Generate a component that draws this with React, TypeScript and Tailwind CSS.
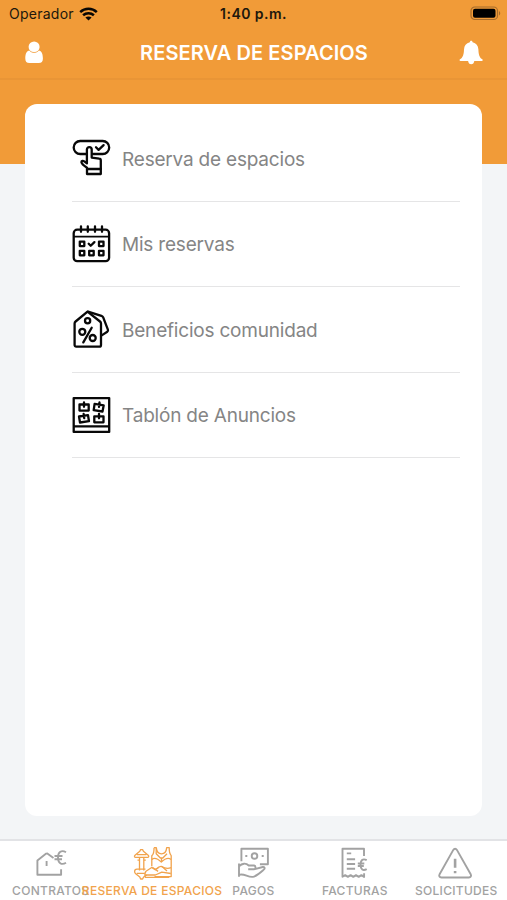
import { ReactNode } from "react"

type IconProps = { children: ReactNode }

const RowIcon = ({ children }: IconProps) => (
  <svg className="w-10 h-10 shrink-0" viewBox="0 0 40 40" fill="none" stroke="#080808" strokeWidth="2.3" strokeLinecap="round" strokeLinejoin="round">{children}</svg>
)

const TabIcon = ({ children }: IconProps) => (
  <svg className="w-10 h-9 shrink-0" viewBox="0 0 40 36" fill="none" stroke="currentColor" strokeWidth="1.9" strokeLinejoin="round">{children}</svg>
)

const menu = [
  {
    label: "Reserva de espacios",
    icon: (
      <RowIcon>
        <path d="M14 16H8.2A6.5 6.5 0 0 1 8.2 3H30.7A6.5 6.5 0 0 1 30.7 16H21" />
        <path d="M24 9.3l2.6 2.6 5-4.8" />
        <path d="M15 31v-1.2c-3-2-5.4-3.8-5.6-5.6 0-1.4 1.7-1.6 2.9-.8l2.6 2V11.5a2.4 2.4 0 0 1 4.8 0V19.6l7.5 1.1c1 .1 1.600.8 1.600 1.800v8.500" />
        <path d="M15 31h13.8v5H15z" />
      </RowIcon>
    ),
  },
  {
    label: "Mis reservas",
    icon: (
      <RowIcon>
        <rect x="1.7" y="5.7" width="35.4" height="31.5" rx="3.5" />
        <path d="M2 12.7h35" strokeWidth="1.8" />
        <path d="M9 2.5v5.300M15.800 2.500v5.300M23 2.500v5.300M30 2.500v5.300" />
        <path d="M7.8 17.6h4.5v4.5H7.8zM27 17.6h4.5v4.5H27zM7.8 26.8h4.5v4.5H7.8zM17.2 26.8h4.5v4.5h-4.5zM27 26.8h4.5v4.5H27z" />
        <path d="M16.7 19.7l2 2 3.7-3.6" />
      </RowIcon>
    ),
  },
  {
    label: "Beneficios comunidad",
    icon: (
      <RowIcon>
        <path d="M15.5 2.7L28 12.5c.6.5 1 1.2 1 2V36c0 1-.7 1.7-1.7 1.7H4.3c-1 0-1.7-.7-1.7-1.7V14.5c0-.8.4-1.5 1-2z" />
        <path d="M16 2.7l13.4 4.1c.9.3 1.5.8 1.8 1.6l4.7 12.3c.3.8 0 1.5-.6 2L29.3 26.6" />
        <circle cx="15.6" cy="11.7" r="2.6" />
        <circle cx="10.3" cy="22.8" r="3" />
        <circle cx="20.7" cy="29" r="3" />
        <path d="M19.7 18.8l-8.4 14.6" />
      </RowIcon>
    ),
  },
  {
    label: "Tablón de Anuncios",
    icon: (
      <RowIcon>
        <path d="M1.7 3.1h35.5v33.8H1.7zM2 31.4h35" />
        <path d="M7.5 9.5h9.2v6.1H7.5zM12 7.5v4.3" />
        <path d="M22.6 8.9l9.1 1.4-1.2 6.2-8.800-1.400zM27.5 7.5l-.5 4.3" />
        <path d="M7 21.5l9-1.3 1 6-9 1.3zM11.6 18.8l.6 4.3" />
        <path d="M22.3 21.3h9.2v6h-9.2zM27 19v4.3" />
      </RowIcon>
    ),
  },
]

const tabs = [
  {
    label: "CONTRATOS",
    icon: (
      <TabIcon>
        <path d="M22.5 12l-6.2-4.5-1.1.1-8.8 6.8V28.8h23.7v-5.6" />
        <path d="M15.6 15v5" />
        <path d="M35 6.2c-4.5-2.6-8-.2-8 5.3s3.5 8 8 5.2M23.5 10h8M23.5 13.3h7.5" />
      </TabIcon>
    ),
  },
  {
    label: "RESERVA DE ESPACIOS",
    active: true,
    icon: (
      <TabIcon>
        <g strokeWidth="1.3">
          <path d="M8.6 3.6h2l.8 1.6 4.8 4c.9.8.7 2.2-.7 2.2H3.7c-1.4 0-1.6-1.4-.7-2.2l4.8-4zM5 8.6h9.3" />
          <path d="M7.5 11.4v13.2M11.8 11.4v13.2M5.500 14.200h2M11.800 14.200h2" />
          <path d="M2.600 25.800c0-1.700.8-2.600 2.300-2.600h8.600M2.600 25.800c0 1 .5 1.500 1.100 2l4.100 3.200.8 2h2l1-2 3.200-2M4.800 27.400h8" />
          <path d="M22 1.6h2.3c.4 4.2 2.3 6.2 5.2 6.2s4.8-2 5.2-6.2h2.5c-.1 4.3.4 6.4 2 8v21H22.5M22 1.6c.2 4-.2 6.4-2.2 8.2v10.5" />
          <path d="M19.8 13.6c2.8-2.6 6-.8 9.5 2.5 3.6-3.4 7-5 9.8-2.5M24.2 2v5.7l4.2 4.3h2.4L35 7.7M29.5 12v3.4" />
          <path d="M14 25.2l5.7-3.7 3.5 2.3c2.2-1.9 4-3.8 6.3-3.3 3.8 2.3 6.4 2.5 9.5 1.2M14 25.2c-1.5 1.6-1.2 4.2-.7 6.2h24M13.3 29h10l6.5-2.800 9 1.300" />
          <path d="M20.3 21.2l5.8 4.2M23.3 23.6l3-1.6M30 20.5l5 4.5" />
        </g>
      </TabIcon>
    ),
  },
  {
    label: "PAGOS",
    icon: (
      <TabIcon>
        <path d="M8.4 15.2V2.8h26.5v15.4h-8" />
        <circle cx="21.5" cy="10" r="2.8" />
        <path d="M12.3 10h2M28.7 10h2" strokeWidth="2" />
        <path d="M6 17.5v13.2M6 20.3c3.1-3.2 7-3.5 9.7-.8h5.1c2.3.2 2.3 3.6 0 3.8h-5.6M21.8 23.2l8-2.2c1.7-.2 2.4 1.3 1.2 2.4-3.4 3-6 5.6-10.2 7.3-5.4 1.5-9.6-3.8-14.8-1.8" />
      </TabIcon>
    ),
  },
  {
    label: "FACTURAS",
    icon: (
      <TabIcon>
        <path d="M29 10V2.8H7.5v28l2.7-1.7 2.7 1.8 2.7-1.8 2.7 1.8 2.7-1.8 2.7 1.8 2.7-1.8 2.7 1.8v-3.6" />
        <path d="M11.8 7.4h4.4M11.8 13.3h8.3M11.8 18h8.3M11.8 22.7h8.3" />
        <path d="M31.7 14.2c-3.6-2-6.2-.3-6.2 4.5s2.6 6.5 6.2 4.4M22.8 17.5h6.5M22.8 20h6" />
      </TabIcon>
    ),
  },
  {
    label: "SOLICITUDES",
    icon: (
      <TabIcon>
        <path d="M17.3 3.9c.9-1.5 2.7-1.5 3.6 0l13.8 24.4c.9 1.7 0 3.2-1.8 3.2H5.4c-1.8 0-2.8-1.5-1.8-3.2z" />
        <path d="M19.1 12.7v9M19.1 24.9v2.3" strokeWidth="2.6" />
      </TabIcon>
    ),
  },
]

const StatusBar = () => (
  <div className="grid grid-cols-3 items-center h-[27px] pl-[9px] pr-[6px] text-[#20170c]">
    <div className="flex items-center gap-[5px] text-[14px] tracking-[0.25px]">
      Operador
      <svg className="w-[19px] h-[14px]" viewBox="0 0 19 14" fill="none" stroke="#090704" strokeWidth="2.5">
        <path d="M1.2 5.1c4.7-4.4 11.9-4.4 16.6 0M4.1 8.3c3.1-2.8 7.7-2.8 10.8 0" />
        <path d="M9.500 13.600L6.400 10.600c1.800-1.500 4.400-1.500 6.200 0z" fill="#090704" stroke="none" />
      </svg>
    </div>
    <div className="-ml-[3px] text-center text-[14px] font-semibold whitespace-nowrap tracking-[0.45px]">1:40 p.m.</div>
    <svg className="w-[31px] h-[15px] justify-self-end" viewBox="0 0 31 15">
      <rect x="1" y="1" width="26.5" height="12.5" rx="3.8" fill="none" stroke="#a66c2b" strokeWidth="1.2" />
      <rect x="3" y="2.8" width="22.5" height="9" rx="2" fill="#000" />
      <path d="M29 5v4.5c1.7-.7 1.7-3.8 0-4.5" fill="#a66c2b" />
    </svg>
  </div>
)

export default function App() {
  return (
    <div className="flex flex-col h-[900px] w-full overflow-hidden bg-[#f3f5f7] font-['Inter','Liberation_Sans',sans-serif]">
      <header className="h-[164px] shrink-0 bg-[#f19b38]">
        <StatusBar />
        <div className="flex items-center justify-between h-[53px] pl-[25px] pr-[24px] border-b-2 border-[#e99536]">
          <svg className="w-[19px] h-[23px]" viewBox="0 0 19 23" fill="#fff">
            <circle cx="9.1" cy="6" r="5.5" />
            <path d="M4.5 9.5C1.5 10 .3 13 .3 17.5c0 3 1.3 4.5 4.2 4.5h9.2c2.9 0 4.2-1.5 4.2-4.5 0-4.5-1.2-7.5-4.2-8-2.8 2.7-6.4 2.7-9.2 0z" />
            <path d="M4.5 9.5c2.8 2.7 6.4 2.7 9.2 0" fill="none" stroke="#f19b38" strokeWidth=".7" />
          </svg>
          <h1 className="pl-[5px] text-[20px] font-semibold text-white whitespace-nowrap tracking-[0.1px]">RESERVA DE ESPACIOS</h1>
          <svg className="w-[24px] h-[25px]" viewBox="0 0 24 25" fill="#fff">
            <path d="M12.2.7c.9 0 1.3.6 1.4 1.5 3.6.7 5.6 3.4 5.8 7.2.2 5 .9 8 4.2 10.2.4.8 0 1.3-.7 1.3h-7.6c-.2 2-1.4 3.3-3.1 3.3s-2.9-1.3-3.1-3.3H1.5c-.8 0-1.2-.6-.8-1.3C4 17.4 4.8 14.4 5 9.4c.2-3.8 2.2-6.5 5.8-7.2.1-.9.5-1.500 1.400-1.500z" />
          </svg>
        </div>
      </header>

      <main className="-mt-[60px] mx-[25px] h-[712px] shrink-0 rounded-xl bg-white pt-[12px] pl-[47px] pr-[22px]">
        {menu.map((item) => (
          <div key={item.label} className="flex items-center gap-[10px] h-[85.5px] border-b border-[#e5e5e6] text-[#858585]">
            {item.icon}
            <span className="pt-[3px] text-[19px] leading-6 whitespace-nowrap tracking-[-0.2px]">{item.label}</span>
          </div>
        ))}
      </main>

      <nav className="mt-auto grid grid-cols-5 h-[61px] shrink-0 border-t-2 border-[#e2e3e6] bg-white">
        {tabs.map((tab) => (
          <div key={tab.label} className={`flex flex-col items-center min-w-0 pt-[5px] ${tab.active ? "text-[#f1a34c]" : "text-[#a2a2a2]"}`}>
            {tab.icon}
            <span className="mt-[1px] text-[12px] leading-4 font-medium whitespace-nowrap tracking-[0.3px]">{tab.label}</span>
          </div>
        ))}
      </nav>
    </div>
  )
}
